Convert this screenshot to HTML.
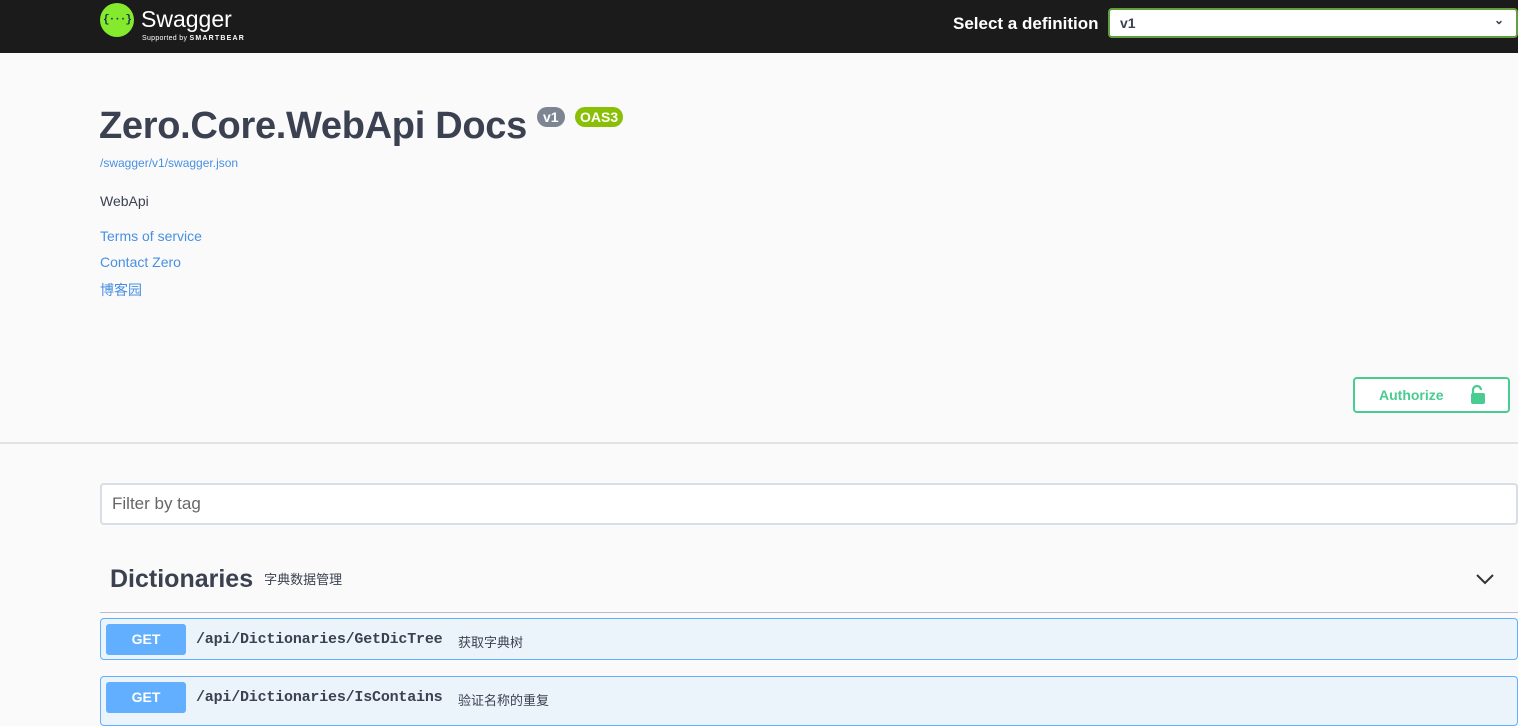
<!DOCTYPE html>
<html><head><meta charset="utf-8"><style>
*{box-sizing:border-box;margin:0;padding:0}
body{width:1518px;height:709px;overflow:hidden;background:#fafafa;font-family:"Liberation Sans","Noto Sans CJK SC",sans-serif;color:#3b4151;position:relative}
.top{position:absolute;left:0;top:0;width:1518px;height:53px;background:#1b1b1b}
.logo{position:absolute;left:100px;top:3px;width:34px;height:34px;border-radius:50%;background:#85ea2d;color:#173647;font:bold 11px "Liberation Mono",monospace;text-align:center;line-height:34px;letter-spacing:-1px}
.sw{position:absolute;left:141px;top:6px;color:#fff;font-size:23px}
.sb{position:absolute;left:142px;top:35px;color:#fff;font-size:7px;letter-spacing:.3px}
.sel{position:absolute;left:953px;top:14px;color:#fff;font-weight:bold;font-size:17px}
.box{position:absolute;left:1108px;top:8px;width:410px;height:30px;border:2px solid #62a03f;border-radius:4px;background:#fff;font-weight:bold;font-size:14px;padding:5px 10px}
.abs{position:absolute}
a{color:#4990e2;text-decoration:none}
.op{position:absolute;left:100px;width:1418px;height:42px;border:1px solid #61affe;border-radius:4px;background:#ebf3fb}
.get{position:absolute;left:5px;top:5px;width:80px;height:31px;background:#61affe;border-radius:3px;color:#fff;font-weight:bold;font-size:14px;text-align:center;line-height:31px}
.path{position:absolute;left:95px;top:12px;font:bold 15px "Liberation Mono",monospace;color:#3b4151;letter-spacing:-0.2px}
.desc{position:absolute;top:13px;font-size:13px;color:#3b4151}
</style></head><body>
<div class="top"><div class="logo">{···}</div><div class="sw">Swagger</div><div class="sb">Supported by <b style="font-size:7px;letter-spacing:1.2px">SMARTBEAR</b></div>
<div class="sel">Select a definition</div><div class="box">v1<span style="position:absolute;right:12px;top:3px;font-size:12px">⌄</span></div></div>
<div class="abs" style="left:99px;top:105px;font-size:38px;font-weight:bold;letter-spacing:-0.3px">Zero.Core.WebApi Docs</div>
<div class="abs" style="left:537px;top:107px;background:#7d8492;color:#fff;font-weight:bold;font-size:14px;border-radius:10px;padding:2px 6px">v1</div>
<div class="abs" style="left:575px;top:107px;background:#89bf04;color:#fff;font-weight:bold;font-size:14px;border-radius:10px;padding:2px 5px">OAS3</div>
<a class="abs" style="left:100px;top:156px;font-size:12px">/swagger/v1/swagger.json</a>
<div class="abs" style="left:100px;top:193px;font-size:14px">WebApi</div>
<a class="abs" style="left:100px;top:228px;font-size:14px">Terms of service</a>
<a class="abs" style="left:100px;top:254px;font-size:14px">Contact Zero</a>
<a class="abs" style="left:100px;top:280px;font-size:14px">博客园</a>
<div class="abs" style="left:1353px;top:377px;width:157px;height:36px;border:2px solid #49cc90;border-radius:4px;background:#fff;color:#49cc90;font-weight:bold;font-size:14px;padding:8px 0 0 24px">Authorize
<svg style="position:absolute;left:115px;top:6px" width="16" height="20" viewBox="0 0 16 20"><path d="M3 8V5a4 4 0 0 1 8 0" stroke="#49cc90" stroke-width="2.2" fill="none"/><rect x="1" y="8" width="14" height="11" rx="2" fill="#49cc90"/></svg></div>
<div class="abs" style="left:0;top:442px;width:1518px;height:2px;background:#e3e3e3"></div>
<div class="abs" style="left:100px;top:483px;width:1418px;height:42px;border:2px solid #d8dde7;border-radius:4px;background:#fff;font-size:17px;color:#666;padding:9px 10px">Filter by tag</div>
<div class="abs" style="left:110px;top:565px;font-size:25px;font-weight:bold">Dictionaries <span style="font-size:13px;font-weight:normal;margin-left:4px;vertical-align:3px">字典数据管理</span></div>
<svg class="abs" style="left:1475px;top:572px" width="20" height="14" viewBox="0 0 20 14"><path d="M2 3l8 8 8-8" stroke="#333" stroke-width="2" fill="none"/></svg>
<div class="abs" style="left:100px;top:612px;width:1418px;height:1px;background:#bbc"></div>
<div class="op" style="top:618px"><div class="get">GET</div><div class="path">/api/Dictionaries/GetDicTree</div><div class="desc" style="left:357px">获取字典树</div></div>
<div class="op" style="top:676px;height:50px"><div class="get">GET</div><div class="path">/api/Dictionaries/IsContains</div><div class="desc" style="left:357px">验证名称的重复</div></div>
</body></html>
